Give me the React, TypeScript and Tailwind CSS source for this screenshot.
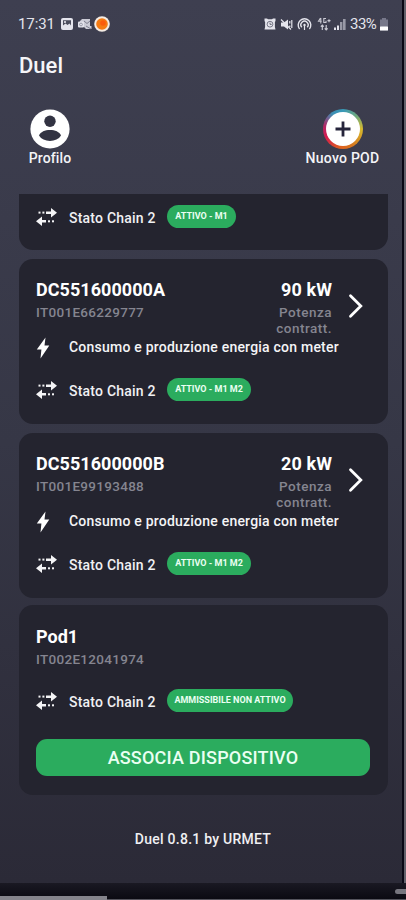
import { ReactNode } from "react";

interface Pod {
    name: string;
    code: string;
    power: string;
    status: string;
}

const meteredPods: Pod[] = [
    { name: "DC551600000A", code: "IT001E66229777", power: "90 kW", status: "ATTIVO - M1 M2" },
    { name: "DC551600000B", code: "IT001E99193488", power: "20 kW", status: "ATTIVO - M1 M2" },
];

function StatusBar() {
    return (
        <div className="flex h-[48px] items-center justify-between pl-[18px] pr-[13px] text-[#e4e4ec]">
            <div className="flex items-center">
                <span className="w-[42px] text-[15px] leading-none tracking-[-0.1px]">17:31</span>
                <svg width="14" height="14" viewBox="0 0 14 14">
                    <rect x="1" y="1" width="12" height="12" rx="2" fill="currentColor" />
                    <path d="M3 3.2h8v5.3L9.500 6.500 7.500 8 5.500 6.500 3 8.500z" fill="#4b4c5c" />
                    <circle cx="5" cy="5" r="1.1" fill="currentColor" />
                </svg>
                <svg width="15" height="14" viewBox="0 0 15 14" className="ml-[3px]">
                    <path d="M5 2h8v7h1.500v3H9L7 10H3V4z" fill="currentColor" opacity=".85" />
                    <rect x="1" y="4.5" width="6" height="6" rx="1" fill="currentColor" />
                    <path d="M7 4l3 2.500L13 4M9 9l5 3" stroke="#6b6c7c" strokeWidth=".8" fill="none" />
                    <circle cx="4" cy="7.5" r="1.4" fill="none" stroke="#7b7c8c" strokeWidth=".7" />
                </svg>
                <svg width="16" height="16" viewBox="0 0 16 16" className="ml-[2px]">
                    <circle cx="8" cy="8" r="7.8" fill="#f4ebe3" />
                    <circle cx="8" cy="8" r="5.8" fill="#f47a12" />
                    <circle cx="9" cy="7" r="2.8" fill="#fa5b0c" />
                </svg>
            </div>
            <div className="flex items-center">
                <svg width="12" height="12" viewBox="0 0 12 12">
                    <path d="M.5 .5h2.500l1 .8h4l1-.8h2.500v2.500l-.6 1v5l.6 2.500H.5l.6-2.500V4L.5 3z" fill="currentColor" />
                    <circle cx="6" cy="6.2" r="2.9" fill="none" stroke="#5b5c6c" strokeWidth=".8" />
                    <path d="M6 4.600v1.800h1.700" stroke="#4b4c5c" strokeWidth=".8" fill="none" />
                </svg>
                <svg width="13" height="13" viewBox="0 0 13 13" className="ml-[4px]">
                    <path d="M1 4.500h3L8 1.500v10L4 8.500H1z" fill="currentColor" />
                    <path d="M1 1.500l10 10M9.800 3v2.500M11.800 2v8M9.800 7.500V9" stroke="currentColor" strokeWidth="1.2" fill="none" />
                </svg>
                <svg width="15" height="14" viewBox="0 0 15 14" className="ml-[4px]" fill="none" stroke="currentColor" strokeWidth="1.4">
                    <path d="M2.600 12A6.300 6.300 0 1 1 12.400 12" />
                    <path d="M4.800 10.200A3.600 3.600 0 1 1 10.200 10.200" />
                    <circle cx="7.5" cy="8" r="1.2" fill="currentColor" stroke="none" />
                    <path d="M7.500 8v5" strokeWidth="1.2" />
                </svg>
                <svg width="14" height="14" viewBox="0 0 14 14" className="ml-[5px]" fill="none" stroke="currentColor" opacity=".85">
                    <path d="M3.500 1L1.500 4.300h3.200M3.800 1v5.500M9 1.500H6.800v4H9V3.800M10.500 3.600h3M12 2.200v3" strokeWidth="1.1" />
                    <path d="M5.300 13V8.200M3.800 9.700l1.500-1.500 1.500 1.500M9.200 8v4.800M7.700 11.300l1.500 1.500 1.500-1.500" strokeWidth="1.2" />
                </svg>
                <svg width="13" height="13" viewBox="0 0 13 13" className="ml-[2px]" fill="currentColor">
                    <rect x="1" y="9.5" width="2" height="2.5" />
                    <rect x="4" y="7.5" width="2" height="4.5" />
                    <rect x="7" y="4" width="2.4" height="8" opacity=".55" />
                    <rect x="10" y="1" width="2.6" height="11" opacity=".55" />
                </svg>
                <span className="ml-[4px] w-[27px] whitespace-nowrap text-[15px] leading-none tracking-[-0.5px]">33%</span>
                <svg width="10" height="13" viewBox="0 0 10 13" className="ml-[2px]">
                    <path d="M3 0h4v1.500h2V12.500H1V1.500h2z" fill="#77788a" />
                    <rect x="1" y="8.5" width="8" height="4" rx=".5" fill="#ffffff" />
                </svg>
            </div>
        </div>
    );
}

function ChainIcon() {
    return (
        <svg width="22" height="20" viewBox="0 0 22 20" fill="#f4f4f6">
            <path d="M10 4.500h5V1L21 5.700 15 10.400V6.900h-5z" />
            <path d="M10 13.100H6V9.600L0 14.300 6 19v-3.500h4z" />
            <rect x="2.5" y="4.6" width="2" height="2" />
            <rect x="6.4" y="4.6" width="2" height="2" />
            <rect x="12" y="13.3" width="2" height="2" />
            <rect x="16" y="13.3" width="2" height="2" />
        </svg>
    );
}

function ChainRow({ status, badgeClass }: { status: string; badgeClass: string }) {
    return (
        <div className="flex h-[23px] items-center">
            <div className="w-[33px]"><ChainIcon /></div>
            <span className="w-[98px] whitespace-nowrap pt-[2px] text-[14px] font-medium leading-[20px] tracking-[0.22px] text-[#f0f0f3]">Stato Chain 2</span>
            <span className={`flex h-[23px] items-center justify-center whitespace-nowrap rounded-full bg-[#2bac5e] font-bold text-[#eafff2] ${badgeClass}`}>
                {status}
            </span>
        </div>
    );
}

function Card({ children, className = "" }: { children: ReactNode; className?: string }) {
    return <div className={`rounded-[14px] bg-[#24242f] px-[17px] ${className}`}>{children}</div>;
}

function PodCard({ pod }: { pod: Pod }) {
    return (
        <Card className="h-[165px] pt-[20px]">
            <div className="flex h-[57px]">
                <div className="flex-1 whitespace-nowrap">
                    <h2 className="h-[22px] text-[18px] font-bold leading-[22px] tracking-[0.05px] text-white">{pod.name}</h2>
                    <p className="text-[13.500px] font-medium leading-[22px] tracking-[0.3px] text-[#858590]">{pod.code}</p>
                </div>
                <div className="w-[80px] text-right">
                    <div className="h-[25px] text-[18px] font-bold leading-[22px] tracking-[0.1px] text-white">{pod.power}</div>
                    <p className="text-[13.500px] font-medium leading-[16px] tracking-[0.5px] text-[#858590]">Potenza<br />contratt.</p>
                </div>
                <svg width="18" height="26" viewBox="0 0 18 26" className="ml-[16px] mr-[5px] mt-[14px]" fill="none" stroke="#ffffff" strokeWidth="2.8" strokeLinecap="round">
                    <path d="M2.500 2.800l10.300 10.200L2.500 23.200" />
                </svg>
            </div>
            <div className="flex h-[23px] items-center">
                <div className="w-[33px]">
                    <svg width="14" height="22" viewBox="0 0 14 22" fill="#ffffff">
                        <path d="M9.500 .5L.8 12.500h4.600L4.500 21.500l8.800-13H8.500z" />
                    </svg>
                </div>
                <span className="whitespace-nowrap text-[14px] font-medium tracking-[0.22px] text-[#f4f4f6]">Consumo e produzione energia con meter</span>
            </div>
            <div className="pt-[19px]">
                <ChainRow status={pod.status} badgeClass="w-[84px] text-[9px]" />
            </div>
        </Card>
    );
}

function Actions() {
    return (
        <div className="flex h-[104px] justify-between pl-[28px] pr-[22px] pt-[19px] text-[14px] font-medium text-[#f4f4f7]">
            <button className="flex w-[44px] flex-col items-center">
                <svg width="40" height="40" viewBox="0 0 40 40">
                    <circle cx="20" cy="20" r="19.6" fill="#ffffff" />
                    <circle cx="20" cy="12.3" r="5.7" fill="#323342" />
                    <path d="M9 26.500c1.500-3.700 6-5.500 11-5.500s9.500 1.800 11 5.500c-2.300 3.700-6.200 5.400-11 5.400S11.300 30.200 9 26.500z" fill="#323342" />
                </svg>
                <span className="whitespace-nowrap leading-[18px] tracking-[0.1px]">Profilo</span>
            </button>
            <button className="flex w-[75px] flex-col items-center">
                <div className="flex h-[40px] w-[40px] items-center justify-center rounded-full bg-[conic-gradient(#3899b8,#74aa78_50deg,#d6ba2e_90deg,#d6771e_150deg,#e06020_190deg,#d31b4e_245deg,#b32766_280deg,#3d8fb5_325deg,#3899b8)]">
                    <div className="flex h-[34px] w-[34px] items-center justify-center rounded-full bg-white">
                        <svg width="16" height="16" viewBox="0 0 16 16" stroke="#25243b" strokeWidth="2.8">
                            <path d="M8 .5v15M.5 8h15" />
                        </svg>
                    </div>
                </div>
                <span className="whitespace-nowrap leading-[18px] tracking-[0.25px]">Nuovo POD</span>
            </button>
        </div>
    );
}

export default function App() {
    return (
        <div className="flex h-[900px] w-[406px] flex-col overflow-hidden bg-black font-['Roboto','Liberation_Sans',sans-serif]">
            <div className="flex h-[883px]">
                <div className="flex w-[402px] flex-col bg-linear-to-b from-[#3e3f50] via-[#363746] to-[#2b2a37]">
                    <StatusBar />
                    <h1 className="h-[42px] pl-[19px] text-[22px] font-medium leading-[36px] text-[#f5f5f8]">Duel</h1>
                    <Actions />
                    <main className="ml-[19px] flex w-[369px] flex-col">
                        <div className="h-[56px] rounded-b-[14px] bg-[#24242f] px-[17px] pt-[11px]">
                            <ChainRow status="ATTIVO - M1" badgeClass="w-[69px] text-[9px]" />
                        </div>
                        <div className="mt-[9px] flex flex-col gap-[9px]">
                            {meteredPods.map((pod) => (
                                <PodCard key={pod.name} pod={pod} />
                            ))}
                        </div>
                        <Card className="mt-[7px] h-[190px] pt-[21px]">
                            <h2 className="h-[22px] text-[18px] font-bold leading-[22px] text-white">Pod1</h2>
                            <p className="h-[41px] text-[13.500px] font-medium leading-[22px] tracking-[0.3px] text-[#858590]">IT002E12041974</p>
                            <ChainRow status="AMMISSIBILE NON ATTIVO" badgeClass="w-[126px] text-[9px]" />
                            <button className="mt-[27px] flex h-[37px] w-[334px] items-center justify-center rounded-[11px] bg-[#2bac5e] text-[18px] font-medium tracking-[0.2px] text-[#eafff2]">
                                ASSOCIA DISPOSITIVO
                            </button>
                        </Card>
                    </main>
                    <footer className="pl-[4px] pt-[34px] text-center text-[14px] font-medium leading-[20px] tracking-[0.25px] text-[#f0f0f3]">Duel 0.8.1 by URMET</footer>
                </div>
                <div className="w-[2px] bg-[#090815]" />
                <div className="w-[2px] bg-[#62616b]" />
            </div>
            <div className="flex h-[17px] flex-col justify-between bg-linear-to-b from-[#1a1923] to-[#0a0911]">
                <div className="ml-auto mt-[6px] h-[5px] w-[11px] rounded-l-full bg-[#77767f]" />
                <div className="flex h-[4px]">
                    <div className="w-[107px] bg-[#85848c]" />
                    <div className="mt-[3px] flex-1 bg-[#55545d]" />
                </div>
            </div>
        </div>
    );
}
